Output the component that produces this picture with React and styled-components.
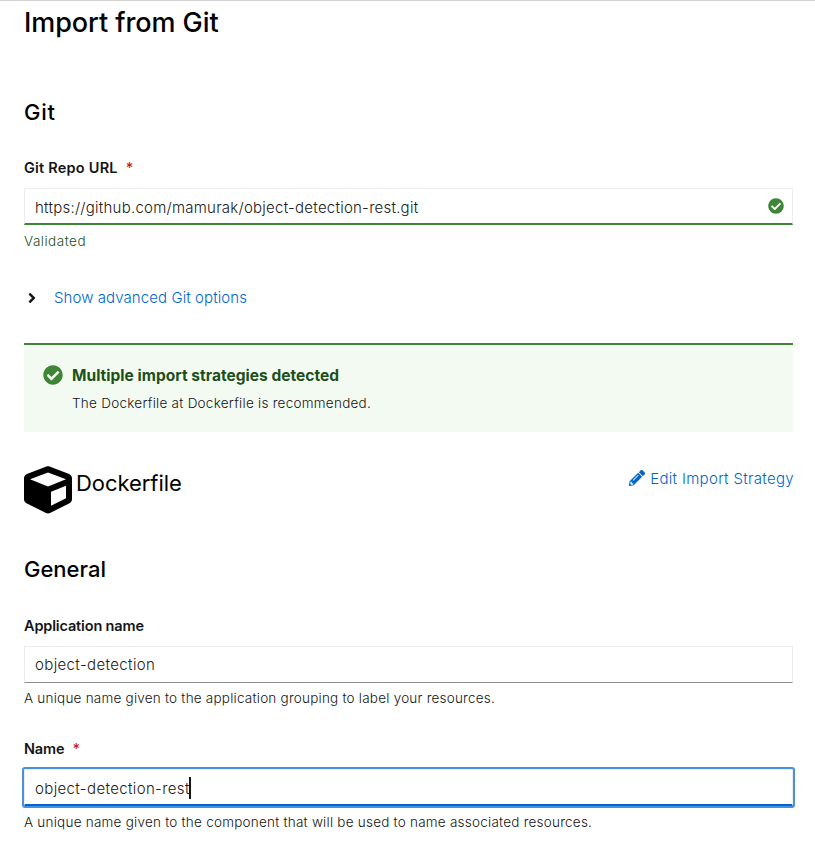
import React from 'react';
import styled, { createGlobalStyle } from 'styled-components';
import { FaAngleRight, FaCheckCircle, FaCube, FaPencilAlt } from 'react-icons/fa';

const GlobalStyle = createGlobalStyle`
  * { box-sizing: border-box; }
  body {
    margin: 0;
    background: #fff;
    color: #151515;
    font-family: Inter, "Liberation Sans", sans-serif;
    -webkit-font-smoothing: antialiased;
  }
  h1, h2, h3, p { margin: 0; }
`;

const Page = styled.main`
  height: 847px;
  padding: 0 22px 0 24px;
  border-top: 1px solid #d2d2d2;
  overflow: hidden;
`;

const Title = styled.h1`
  height: 44px;
  line-height: 44px;
  font-size: 27px;
  font-weight: 500;
  letter-spacing: ${(p) => p.$track || 0}px;
  color: #000;
  white-space: nowrap;
`;

const SectionTitle = styled.h2`
  height: 32px;
  margin-top: ${(p) => p.$gap}px;
  line-height: 32px;
  font-size: 22px;
  font-weight: 500;
  letter-spacing: ${(p) => p.$track || 0}px;
  color: #000;
  white-space: nowrap;
`;

const Field = styled.div`
  display: flex;
  flex-direction: column;
  margin-top: ${(p) => p.$gap}px;
`;

const Label = styled.label`
  display: flex;
  height: 20px;
  line-height: 20px;
  font-size: 14.5px;
  font-weight: 600;
  letter-spacing: ${(p) => p.$track || 0}px;
`;

const Required = styled.span`
  margin-left: 8px;
  color: #c9190b;
  font-weight: 500;
`;

const borders = {
  plain: '1px solid #8a8d90',
  valid: '2px solid #3e8635',
  focused: '2px solid #06c',
};

const InputBox = styled.div`
  display: flex;
  align-items: center;
  justify-content: space-between;
  height: 37px;
  margin-top: 10px;
  padding: 0 8px 0 10px;
  border: 1px solid #ededed;
  border-bottom: ${(p) => borders[p.$state]};
  outline: ${(p) => (p.$state === 'focused' ? '2px solid #4a90e0' : 'none')};
  border-radius: ${(p) => (p.$state === 'focused' ? 1 : 0)}px;
  font-size: 15px;
  color: #202020;
`;

const Value = styled.span`
  display: flex;
  align-items: center;
  padding-top: ${(p) => p.$drop || 0}px;
  font-weight: 350;
  letter-spacing: ${(p) => p.$track || 0}px;
  white-space: nowrap;
`;

const Caret = styled.i`
  width: 2px;
  height: 22px;
  margin-left: -1px;
  background: #151515;
`;

const Helper = styled.p`
  height: 20px;
  margin-top: ${(p) => p.$gap || 6}px;
  line-height: 20px;
  font-size: 13.5px;
  font-weight: 350;
  letter-spacing: ${(p) => p.$track || 0}px;
  color: ${(p) => (p.$valid ? '#1e4f18' : '#151515')};
  white-space: nowrap;
`;

const Toggle = styled.div`
  display: flex;
  align-items: center;
  height: 25px;
  margin-top: 34px;
  margin-bottom: 33px;
  gap: 14px;
`;

const Link = styled.span`
  display: inline-flex;
  align-items: center;
  gap: 5px;
  height: 24px;
  font-size: 15px;
  font-weight: 350;
  letter-spacing: ${(p) => p.$track || 0}px;
  color: #06c;
  white-space: nowrap;
`;

const Alert = styled.section`
  display: flex;
  height: 89px;
  padding: 20px 19px;
  gap: 9px;
  background: #f3faf2;
  border-top: 2px solid #3e8635;
`;

const AlertTitle = styled.h3`
  height: 23px;
  line-height: 22px;
  font-size: 15.5px;
  font-weight: 700;
  letter-spacing: ${(p) => p.$track || 0}px;
  color: #1e4f18;
`;

const AlertText = styled.p`
  margin-top: 5px;
  line-height: 20px;
  font-size: 13.5px;
  font-weight: 350;
  letter-spacing: ${(p) => p.$track || 0}px;
`;

const Strategy = styled.div`
  display: flex;
  justify-content: space-between;
  height: 48px;
  margin-top: 34px;
`;

const StrategyName = styled.div`
  display: flex;
  gap: 4px;
  line-height: 34px;
  font-size: 22px;
  font-weight: 400;
  letter-spacing: ${(p) => p.$track || 0}px;
  color: #000;
`;

const StrategyEdit = styled.div`
  height: 24px;
  margin-right: -1px;
  display: flex;
  align-items: center;
`;

export default function App() {
  return (
    <>
      <GlobalStyle />
      <Page>
        <Title $track={-0.06}>Import from Git</Title>
        <SectionTitle $gap={51} $track={0.7}>Git</SectionTitle>
        <Field $gap={30}>
          <Label $track={0.22}>Git Repo URL<Required>*</Required></Label>
          <InputBox $state="valid">
            <Value $track={0.24} $drop={2}>https://github.com/mamurak/object-detection-rest.git</Value>
            <FaCheckCircle size={16} color="#3e8635" />
          </InputBox>
          <Helper $valid $track={0.5}>Validated</Helper>
        </Field>
        <Toggle>
          <FaAngleRight size={16} />
          <Link $track={0.08}>Show advanced Git options</Link>
        </Toggle>
        <Alert>
          <FaCheckCircle size={20} color="#3e8635" />
          <div>
            <AlertTitle $track={0.03}>Multiple import strategies detected</AlertTitle>
            <AlertText $track={0.26}>The Dockerfile at Dockerfile is recommended.</AlertText>
          </div>
        </Alert>
        <Strategy>
          <StrategyName $track={-0.06}><FaCube size={48} />Dockerfile</StrategyName>
          <StrategyEdit><Link $track={0.32}><FaPencilAlt size={16} />Edit Import Strategy</Link></StrategyEdit>
        </Strategy>
        <SectionTitle $gap={39}>General</SectionTitle>
        <Field $gap={31}>
          <Label $track={-0.15}>Application name</Label>
          <InputBox $state="plain"><Value $track={0.37}>object-detection</Value></InputBox>
          <Helper $gap={5} $track={0.225}>A unique name given to the application grouping to label your resources.</Helper>
        </Field>
        <Field $gap={31}>
          <Label $track={-0.15}>Name<Required>*</Required></Label>
          <InputBox $state="focused"><Value $track={0.36} $drop={2}>object-detection-rest<Caret /></Value></InputBox>
          <Helper $track={0.235}>A unique name given to the component that will be used to name associated resources.</Helper>
        </Field>
      </Page>
    </>
  );
}
